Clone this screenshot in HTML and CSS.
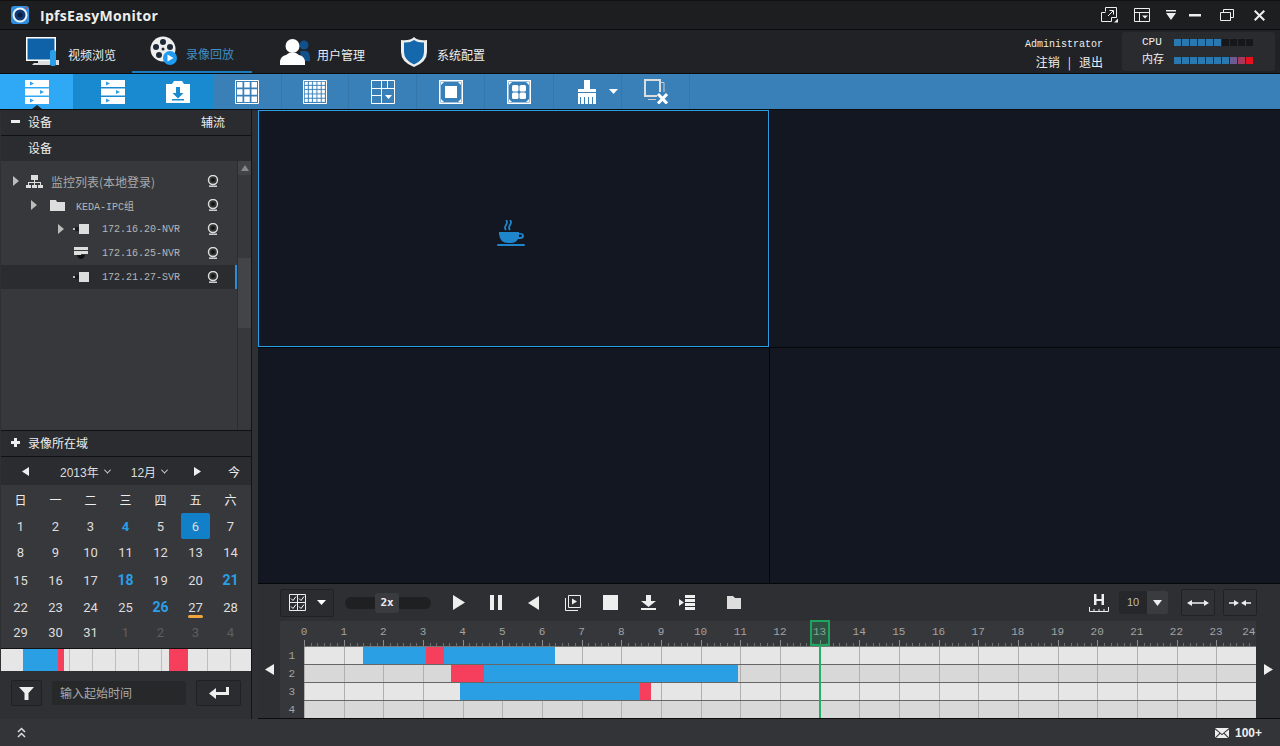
FILE: index.html
```html
<!DOCTYPE html>
<html lang="zh">
<head>
    <meta charset="UTF-8">
    <title>IpfsEasyMonitor</title>
    <link rel="stylesheet" href="styles.css">
</head>
<body>
<svg class="defs" width="0" height="0">
    <symbol id="lens" viewBox="0 0 12 12">
        <circle cx="6" cy="5" r="4.500" fill="#333" stroke="#ddd" stroke-width="1.400"/>
        <circle cx="6" cy="5" r="1.800" fill="#111"/>
        <path d="M2 11.200h8" stroke="#ddd" stroke-width="1.400"/>
    </symbol>
    <symbol id="cam" viewBox="0 0 16 10">
        <rect x="6" y="0" width="10" height="10" fill="#ddd"/>
        <rect x="2" y="3" width="4" height="4" fill="#1c1c1c"/>
        <rect x="0" y="4" width="2" height="2" fill="#bbb"/>
    </symbol>
    <symbol id="tri" viewBox="0 0 6 10"><path d="M0 0l6 5-6 5z" fill="#bbb"/></symbol>
    <symbol id="rows" viewBox="0 0 24 24">
        <path d="M0 0h24v7H0zM0 8.500h24v7H0zM0 17h24v7H0z" fill="#fff"/>
        <path d="M5 1.500l4 2-4 2zM15 10l4 2-4 2zM5 18.500l4 2-4 2z" fill="#2f9fe4"/>
    </symbol>
    <pattern id="dots" width="4.300" height="4.300" patternUnits="userSpaceOnUse" x="1.500" y="1.500">
        <rect width="3.300" height="3.300" fill="#fff"/>
    </pattern>
</svg>

<div class="app">
    <div class="titlebar">
        <svg class="logo" width="18" height="18" viewBox="0 0 18 18">
            <rect width="18" height="18" rx="3" fill="#2f8fe0"/>
            <circle cx="9" cy="9" r="7.500" fill="#eef4fb"/>
            <circle cx="9" cy="9" r="5.500" fill="#123a73"/>
            <circle cx="9" cy="9" r="2.500" fill="#0a1d40"/>
            <circle cx="15" cy="2" r="1" fill="#e33"/>
        </svg>
        <span class="app-name">IpfsEasyMonitor</span>
        <div class="win-btns">
            <svg width="20" height="16" viewBox="0 0 20 16" fill="none" stroke="#eee"><path d="M.5 5.500h4M.5 5.500v9h10v-4M4.500 4.500v-4h11v10h-5"/><path d="M7 9l5-5M8.500 3.500h4v4"/><path d="M17 15.500h-4l4-4z" fill="#eee" stroke="none"/></svg>
            <svg width="19" height="14" viewBox="0 0 19 14" fill="none" stroke="#eee"><path d="M.5.500h15v13H.5zM.5 4.500h15M5.500 4.500v9"/><path d="M8 7.500h6l-3 3z" fill="#eee" stroke="none"/></svg>
            <svg width="10" height="10" viewBox="0 0 10 10"><path d="M0 0h10v1.500H0zM0 3h10l-5 7z" fill="#eee"/></svg>
            <svg width="18" height="3" viewBox="0 0 18 3"><path d="M0 0h12v2.500H0z" fill="#eee"/></svg>
            <svg width="21" height="12" viewBox="0 0 21 12" fill="none" stroke="#eee"><path d="M.5 3.500h10v8H.5zM3.500 3V.5h10v8H11"/></svg>
            <svg width="11" height="11" viewBox="0 0 11 11" fill="none" stroke="#eee" stroke-width="2"><path d="M.7.7l9.600 9.600M10.300.7L.7 10.300"/></svg>
        </div>
    </div>

    <div class="navbar">
        <div class="nav-item nav-video">
            <svg width="34" height="29" viewBox="0 0 34 29">
                <rect x="0" y="0" width="30" height="24" fill="#fff"/>
                <rect x="1.500" y="1.500" width="27" height="21" fill="#0f62a8"/>
                <path d="M6 28l2-2h4v-2h12v4z" fill="#ddd"/>
                <rect x="24" y="13" width="6" height="16" rx="2" fill="#2a9fe8"/>
                <rect x="30" y="23" width="3" height="5" fill="#ddd"/>
            </svg>
            <span>视频浏览</span>
        </div>
        <div class="nav-item nav-record">
            <svg width="28" height="30" viewBox="0 0 28 30">
                <circle cx="13" cy="13" r="12.500" fill="#eee"/>
                <g fill="#1c2a38"><circle cx="13" cy="6" r="3"/><circle cx="6" cy="11" r="3"/><circle cx="20" cy="11" r="3"/><circle cx="9" cy="19" r="3"/><circle cx="13" cy="13" r="1.500"/></g>
                <circle cx="20" cy="22" r="7" fill="#1f9bf0"/>
                <path d="M17.500 18.500l6 3.500-6 3.500z" fill="#fff"/>
            </svg>
            <span>录像回放</span>
        </div>
        <div class="nav-item nav-user">
            <svg width="30" height="28" viewBox="0 0 30 28">
                <circle cx="24" cy="7" r="4.500" fill="#12508a"/>
                <path d="M20 13h7q3 2 3 7v3h-8z" fill="#12508a"/>
                <circle cx="12.500" cy="8" r="7" fill="#fff"/>
                <path d="M0 27v-4q1-5 6-6l3-2h7l3 2q5 1 6 6v4z" fill="#fff"/>
            </svg>
            <span>用户管理</span>
        </div>
        <div class="nav-item nav-config">
            <svg width="28" height="30" viewBox="0 0 28 30">
                <path d="M14 0q4 4 13 3v12q0 10-13 15Q1 25 1 15V3q9 1 13-3z" fill="#eee"/>
                <path d="M14 3q4 3 10 2.500V15q0 8-10 12.500Q4 23 4 15V5.500Q10 6 14 3z" fill="#1568ab"/>
            </svg>
            <span>系统配置</span>
        </div>
        <div class="user-box">
            <div class="user-name">Administrator</div>
            <div class="user-links">注销<span class="user-sep">|</span>退出</div>
        </div>
        <div class="meter-box">
            <div class="meter-row">
                <span class="meter-label">CPU</span>
                <div class="meter">
                    <i class="on"></i><i class="on"></i><i class="on"></i><i class="on"></i><i class="on"></i><i class="on"></i><i></i><i></i><i></i><i></i>
                </div>
            </div>
            <div class="meter-row">
                <span class="meter-label">内存</span>
                <div class="meter">
                    <i class="on"></i><i class="on"></i><i class="on"></i><i class="on"></i><i class="on"></i><i class="on"></i><i class="on"></i><i style="background:#6d5c92"></i><i style="background:#a53a5c"></i><i style="background:#e8101c"></i>
                </div>
            </div>
        </div>
    </div>

    <div class="toolbar">
        <div class="tool tool-active w73"><svg width="24" height="24"><use href="#rows"/></svg></div>
        <div class="tool tool-blue tool-second w70"><svg width="24" height="24"><use href="#rows"/></svg></div>
        <div class="tool tool-blue w70">
            <svg width="24" height="22" viewBox="0 0 24 22"><path d="M0 3h6l2-3h8l2 3h6v19H0z" fill="#fff"/><path d="M10 6h4v6h3.500L12 17.500 6.500 12H10z" fill="#1a8ad0"/><path d="M6 18h12v1.500H6z" fill="#1a8ad0"/></svg>
        </div>
        <div class="tool w69">
            <svg width="24" height="24" viewBox="0 0 24 24" fill="none" stroke="#fff"><path d="M.5.5h23v23H.5z"/><path d="M2 2h5.500v5.500H2zM9.250 2h5.500v5.500h-5.500zM16.500 2H22v5.500h-5.500zM2 9.250h5.500v5.500H2zM9.250 9.250h5.500v5.500h-5.500zM16.500 9.250H22v5.500h-5.500zM2 16.500h5.500V22H2zM9.250 16.500h5.500V22h-5.500zM16.500 16.500H22V22h-5.500z" fill="#fff" stroke="none"/></svg>
        </div>
        <div class="tool w67">
            <svg width="24" height="24" viewBox="0 0 24 24"><path d="M.5.500h23v23H.5z" fill="none" stroke="#fff"/><rect x="1.500" y="1.500" width="21" height="21" fill="url(#dots)"/></svg>
        </div>
        <div class="tool w68">
            <svg width="24" height="24" viewBox="0 0 24 24" fill="none" stroke="#fff"><path d="M.5.500h23v23H.5zM.5 8.500h23M.5 15.500h10M10.500.5v23M16.500.5v8"/><path d="M14 15h7l-3.500 4z" fill="#fff" stroke="none"/></svg>
        </div>
        <div class="tool w68">
            <svg width="24" height="24" viewBox="0 0 24 24" fill="none" stroke="#fff" stroke-width="1.500"><path d="M.75.75h22.500v22.500H.75z"/><rect x="6" y="6" width="12" height="12" fill="#fff" stroke="none"/><path d="M2 2h3L2 5zM22 2h-3l3 3zM2 22h3l-3-3zM22 22h-3l3-3z" fill="#fff" stroke="none"/></svg>
        </div>
        <div class="tool w69">
            <svg width="24" height="24" viewBox="0 0 24 24" fill="none" stroke="#fff" stroke-width="1.500"><path d="M.75.75h22.500v22.500H.75z"/><g fill="#fff" stroke="none"><rect x="5" y="5" width="6.500" height="6.500" rx="1.500"/><rect x="12.500" y="5" width="6.500" height="6.500" rx="1.500"/><rect x="5" y="12.500" width="6.500" height="6.500" rx="1.500"/><rect x="12.500" y="12.500" width="6.500" height="6.500" rx="1.500"/></g><path d="M2 2h3L2 5zM22 2h-3l3 3zM2 22h3l-3-3zM22 22h-3l3-3z" fill="#fff" stroke="none"/></svg>
        </div>
        <div class="tool w68 tool-brush">
            <svg width="20" height="24" viewBox="0 0 20 24"><path d="M7 0h6v9h6v3H1V9h6zM1 13h18v11h-3v-7h-1v7h-3v-7h-1v7H8v-7H7v7H4v-7H3v7H1z" fill="#fff"/></svg>
            <svg width="9" height="5" viewBox="0 0 9 5"><path d="M0 0h9L4.500 5z" fill="#fff"/></svg>
        </div>
        <div class="tool w68">
            <svg width="24" height="25" viewBox="0 0 24 25" fill="none"><path d="M13 17H1V1h15v12" stroke="#ddd" stroke-width="2"/><path d="M16.500 3.500H20V13M4 20.500h8" stroke="#ccc" stroke-width="1"/><path d="M14 15l9 9.500M23 15l-9 9.500" stroke="#fff" stroke-width="3"/></svg>
        </div>
    </div>

    <div class="main">
        <div class="side">
            <div class="side-head">
                <span class="sign"></span><span class="side-title">设备</span><span class="side-right">辅流</span>
            </div>
            <div class="side-sub">设备</div>
            <div class="tree-wrap">
                <div class="tree">
                    <div class="tree-row">
                        <svg class="arrow" width="6" height="10"><use href="#tri"/></svg>
                        <svg class="node" width="17" height="13" viewBox="0 0 17 13"><path d="M5 0h7v5H5zM8 5h1v2h6v3h-1V8H9v2H8V8H3v2H2V7h6zM0 10h5v3H0zM6 10h5v3H6zM12 10h5v3h-5z" fill="#ddd"/></svg>
                        <span class="tree-cn">监控列表(本地登录)</span>
                        <svg class="lens" width="12" height="12"><use href="#lens"/></svg>
                    </div>
                    <div class="tree-row lv1">
                        <svg class="arrow" width="6" height="10"><use href="#tri"/></svg>
                        <svg class="node" width="15" height="11" viewBox="0 0 15 11"><path d="M0 0h6l1 2h8v9H0z" fill="#ddd"/></svg>
                        <span class="tree-label">KEDA-IPC组</span>
                        <svg class="lens" width="12" height="12"><use href="#lens"/></svg>
                    </div>
                    <div class="tree-row lv2">
                        <svg class="arrow" width="6" height="10"><use href="#tri"/></svg>
                        <svg class="node" width="16" height="10"><use href="#cam"/></svg>
                        <span class="tree-label">172.16.20-NVR</span>
                        <svg class="lens" width="12" height="12"><use href="#lens"/></svg>
                    </div>
                    <div class="tree-row lv2">
                        <span class="arrow-gap"></span>
                        <svg class="node" width="16" height="12" viewBox="0 0 16 12"><path d="M1 0h14v3H1zM1 4h14v3H8v1H1z" fill="#ddd"/><path d="M4 8h8q-1 4-4 4T4 8z" fill="#111"/></svg>
                        <span class="tree-label">172.16.25-NVR</span>
                        <svg class="lens" width="12" height="12"><use href="#lens"/></svg>
                    </div>
                    <div class="tree-row lv2 tree-sel">
                        <span class="arrow-gap"></span>
                        <svg class="node" width="16" height="10"><use href="#cam"/></svg>
                        <span class="tree-label">172.21.27-SVR</span>
                        <svg class="lens" width="12" height="12"><use href="#lens"/></svg>
                    </div>
                </div>
                <div class="scroll">
                    <div class="scroll-up"><svg width="8" height="6"><path d="M0 6l4-6 4 6z" fill="#888"/></svg></div>
                    <div class="scroll-thumb"></div>
                </div>
            </div>
            <div class="side-head side-head2">
                <span class="sign sign-plus"></span><span class="side-title">录像所在域</span>
            </div>
            <div class="cal-nav">
                <svg width="7" height="9"><path d="M7 0v9L0 4.500z" fill="#eee"/></svg>
                <span class="cal-sel">2013年<b></b></span>
                <span class="cal-sel">12月<b></b></span>
                <svg width="7" height="9"><path d="M0 0v9l7-4.500z" fill="#eee"/></svg>
                <span class="cal-today">今</span>
            </div>
            <div class="cal">
                <span class="cal-h">日</span><span class="cal-h">一</span><span class="cal-h">二</span><span class="cal-h">三</span><span class="cal-h">四</span><span class="cal-h">五</span><span class="cal-h">六</span>
                <span>1</span><span>2</span><span>3</span><span class="rec rec-one">4</span><span>5</span><span class="cur">6</span><span>7</span>
                <span>8</span><span>9</span><span>10</span><span>11</span><span>12</span><span>13</span><span>14</span>
                <span>15</span><span>16</span><span>17</span><span class="rec">18</span><span>19</span><span>20</span><span class="rec">21</span>
                <span>22</span><span>23</span><span>24</span><span>25</span><span class="rec">26</span><span class="mark">27</span><span>28</span>
                <span>29</span><span>30</span><span>31</span><span class="off">1</span><span class="off">2</span><span class="off">3</span><span class="off">4</span>
            </div>
            <div class="day-strip">
                <i class="seg-blue" style="left:22px;width:35px"></i>
                <i class="seg-red" style="left:57px;width:6px"></i>
                <i class="seg-red" style="left:168px;width:19px"></i>
            </div>
            <div class="jump">
                <div class="btn btn-filter"><svg width="15" height="13" viewBox="0 0 15 13"><path d="M0 0h15L9.500 6v7h-4V6z" fill="#eee"/></svg></div>
                <div class="jump-input">输入起始时间</div>
                <div class="btn btn-enter"><svg width="20" height="12" viewBox="0 0 20 12"><path d="M17 0h3v8H7v4L0 6.500 7 1v4h10z" fill="#eee"/></svg></div>
            </div>
        </div>

        <div class="work">
            <div class="videos">
                <div class="pane pane-active">
                    <svg width="28" height="26" viewBox="0 0 28 26">
                        <path d="M9 10q-2-2 0-5t0-5M13 10q-2-2 0-5t0-5" fill="none" stroke="#1f86cc" stroke-width="1.800"/>
                        <path d="M2 12h20v1h1q4 0 4 3t-4 3h-2q-2 4-7 4h-3Q3 23 2 14zM22 14.500V17h1q2 0 2-1.300t-2-1.200z" fill="#1f86cc"/>
                        <rect x="0" y="24" width="28" height="2" rx="1" fill="#1f86cc"/>
                    </svg>
                </div>
                <div class="pane"></div>
                <div class="pane"></div>
                <div class="pane"></div>
            </div>
            <div class="controls">
                <div class="btn btn-view">
                    <svg width="18" height="18" viewBox="0 0 18 18" fill="none" stroke="#eee"><path d="M.5.5h16v16H.5zM.5 8.500h16M8.500.5v16"/><path d="M2 4.500l2 2 3-4M10 4.500l2 2 3-4M2 12.500l2 2 3-4M10 12.500l2 2 3-4" stroke="#fff"/></svg>
                    <svg width="9" height="5" viewBox="0 0 9 5"><path d="M0 0h9L4.500 5z" fill="#fff"/></svg>
                </div>
                <div class="speed"><span class="speed-knob">2x</span></div>
                <div class="ctrl-icons">
                    <svg class="ctrl-play" width="12" height="15" viewBox="0 0 12 15"><path d="M0 0l12 7.500L0 15z" fill="#eee"/></svg>
                    <svg class="ctrl-wide" width="12" height="15" viewBox="0 0 12 15"><path d="M0 0h4v15H0zM8 0h4v15H8z" fill="#eee"/></svg>
                    <svg class="ctrl-wide" width="11" height="14" viewBox="0 0 11 14"><path d="M11 0v14L0 7z" fill="#eee"/></svg>
                    <svg class="ctrl-tight" width="16" height="16" viewBox="0 0 16 16" fill="none" stroke="#eee"><path d="M3.500.5h12v12h-12zM.5 3v12.500H13"/><path d="M7 3.500l5 3-5 3z" fill="#eee" stroke="none"/></svg>
                    <svg width="15" height="15" viewBox="0 0 15 15"><path d="M0 0h15v15H0z" fill="#eee"/></svg>
                    <svg width="15" height="15" viewBox="0 0 15 15"><path d="M5 0h5v6h5l-7.500 6L0 6h5zM0 13h15v2H0z" fill="#eee"/></svg>
                    <svg width="16" height="15" viewBox="0 0 16 15"><path d="M0 4l5 3.500L0 11zM6 0h10v3H6zM6 4h10v3H6zM6 8h10v3H6zM6 12h10v3H6z" fill="#eee"/></svg>
                    <svg class="ctrl-folder" width="14" height="13" viewBox="0 0 14 13"><path d="M0 0h6l2 2h6v11H0z" fill="#ddd"/></svg>
                </div>
                <div class="ctrl-right">
                    <svg width="20" height="18" viewBox="0 0 20 18"><path d="M5 0h2.500v5h5V0H15v11h-2.500V7h-5v4H5z" fill="#eee"/><path d="M.5 13v4.500h19V13M5 15v2M10 15v2M15 15v2" fill="none" stroke="#eee"/></svg>
                    <div class="step"><span>10</span><b><svg width="9" height="6" viewBox="0 0 9 6"><path d="M0 0h9L4.500 6z" fill="#eee"/></svg></b></div>
                    <div class="btn btn-zoom"><svg width="22" height="6" viewBox="0 0 22 6"><path d="M0 3l5-3v2.200h12V0l5 3-5 3V3.800H5V6z" fill="#eee"/></svg></div>
                    <div class="btn btn-zoom"><svg width="22" height="6" viewBox="0 0 22 6"><path d="M0 2.200h5V0l5 3-5 3V3.800H0zM22 2.200h-5V0l-5 3 5 3V3.800h5z" fill="#eee"/></svg></div>
                </div>
            </div>
            <div class="timeline">
                <div class="tl-side"><svg width="9" height="11"><path d="M9 0v11L0 5.500z" fill="#eee"/></svg></div>
                <div class="tl-nums">
                    <span>1</span><span>2</span><span>3</span><span>4</span>
                </div>
                <div class="tl-body">
                    <div class="ruler">
                        <div class="ruler-labels">
                            <span>0</span><span>1</span><span>2</span><span>3</span><span>4</span><span>5</span><span>6</span><span>7</span><span>8</span><span>9</span><span>10</span><span>11</span><span>12</span><span>13</span><span>14</span><span>15</span><span>16</span><span>17</span><span>18</span><span>19</span><span>20</span><span>21</span><span>22</span><span>23</span><span class="ruler-last">24</span>
                        </div>
                    </div>
                    <div class="tl-row">
                        <i class="seg-blue" style="left:59px;width:192px"></i>
                        <i class="seg-red" style="left:122px;width:18px"></i>
                    </div>
                    <div class="tl-row tl-even">
                        <i class="seg-red" style="left:147px;width:33px"></i>
                        <i class="seg-blue" style="left:180px;width:254px"></i>
                    </div>
                    <div class="tl-row">
                        <i class="seg-blue" style="left:156px;width:180px"></i>
                        <i class="seg-red" style="left:336px;width:11px"></i>
                    </div>
                    <div class="tl-row tl-even tl-last"></div>
                    <div class="now-box"></div>
                    <div class="now-line"></div>
                </div>
                <div class="tl-side"><svg width="9" height="11"><path d="M0 0v11l9-5.500z" fill="#eee"/></svg></div>
            </div>
        </div>
    </div>

    <div class="statusbar">
        <svg width="9" height="11" viewBox="0 0 9 11" fill="none" stroke="#ddd" stroke-width="1.500"><path d="M1 5l3.500-3.500L8 5M1 10l3.500-3.500L8 10"/></svg>
        <div class="msg">
            <svg width="14" height="10" viewBox="0 0 14 10"><path d="M0 0h14L7 6zM0 1.500v8l4.500-4.500zM14 1.500v8L9.500 5zM1 10l4.300-4.300L7 7.200l1.700-1.500L13 10z" fill="#eee"/></svg>
            <span>100+</span>
        </div>
    </div>
</div>
</body>
</html>
```

FILE: styles.css
```css
* {
    padding: 0;
    margin: 0;
    box-sizing: border-box;
}

html, body {
    width: 1280px;
    height: 746px;
    overflow: hidden;
    background: #2f3033;
}

body {
    font-family: "Noto Sans CJK SC", "Liberation Sans", sans-serif;
    font-size: 12px;
    color: #eee;
}

svg {
    display: block;
    flex: none;
}

.defs {
    position: absolute;
}

.app {
    width: 1280px;
    height: 746px;
    display: flex;
    flex-direction: column;
}

/* title bar */
.titlebar {
    height: 30px;
    background: #1d1e20;
    border-top: 1px solid #111;
    border-bottom: 1px solid #0c0c0d;
    display: flex;
    align-items: center;
    padding-left: 11px;
}

.app-name {
    margin-left: 11px;
    font-family: "Open Sans", "Liberation Sans", sans-serif;
    font-weight: 700;
    font-size: 14px;
    letter-spacing: .3px;
    color: #eee;
}

.win-btns {
    margin-left: auto;
    display: flex;
    align-items: center;
    gap: 13px;
    padding-right: 15px;
}

/* main nav */
.navbar {
    height: 44px;
    background: #212225;
    border-bottom: 1px solid #0c0c0d;
    display: flex;
    align-items: center;
}

.nav-item {
    display: flex;
    align-items: center;
    height: 43px;
    font-size: 12px;
    color: #eee;
}

.nav-item span {
    padding-top: 6px;
}

.nav-video {
    width: 132px;
    padding-left: 26px;
    gap: 8px;
}

.nav-record {
    width: 120px;
    padding-left: 18px;
    gap: 8px;
    color: #3f8fc8;
    border-bottom: 2px solid #1a7cc0;
}

.nav-user {
    width: 148px;
    padding-left: 28px;
    gap: 7px;
}

.nav-config {
    gap: 9px;
}

.user-box {
    margin-left: auto;
    margin-right: 19px;
    text-align: right;
    color: #eee;
    padding-top: 6px;
}

.user-name {
    font-family: "Liberation Mono", monospace;
    font-size: 10px;
    line-height: 14px;
}

.user-links {
    line-height: 18px;
    margin-top: 1px;
}

.user-sep {
    margin: 0 8px;
}

.meter-box {
    width: 153px;
    height: 39px;
    margin-right: 5px;
    background: #2a2b2e;
    border-radius: 3px;
    padding: 3px 0 0 20px;
    display: flex;
    flex-direction: column;
    gap: 3px;
}

.meter-row {
    display: flex;
    align-items: center;
    height: 15px;
}

.meter-label {
    width: 32px;
    font-family: "Liberation Mono", "Noto Sans CJK SC", monospace;
    font-size: 11px;
    line-height: 15px;
}

.meter {
    display: flex;
}

.meter i {
    width: 7px;
    height: 7px;
    margin-right: 1px;
    background: #16171a;
}

.meter i.on {
    background: #2a78b0;
}

/* tool strip */
.toolbar {
    height: 36px;
    background: #3a80b8;
    border-bottom: 1px solid #0c0c0d;
    display: flex;
}

.tool {
    height: 35px;
    display: flex;
    align-items: center;
    justify-content: center;
    gap: 12px;
    border-right: 1px solid #3576ab;
}

.tool-active {
    background: #2fa9f5;
    border-right: 0;
    position: relative;
}

.tool-active::after {
    content: "";
    position: absolute;
    left: 32px;
    bottom: 0;
    border: 5px solid transparent;
    border-top: 0;
    border-bottom: 4px solid #212225;
}

.tool-blue {
    background: #1a8ad0;
    border-right: 0;
}

.tool-second {
    padding-left: 10px;
}

.tool-brush {
    padding-left: 20px;
}

.w73 { width: 73px; }
.w70 { width: 70px; }
.w69 { width: 69px; }
.w68 { width: 68px; }
.w67 { width: 67px; }

/* main area */
.main {
    flex: 1;
    display: flex;
    min-height: 0;
}

.side {
    width: 251px;
    margin-left: 1px;
    border-right: 1px solid #131416;
    display: flex;
    flex-direction: column;
    flex: none;
    margin-right: 6px;
    background: #2f3033;
}

.side-head {
    height: 26px;
    background: #2b2c2f;
    border-bottom: 1px solid #111;
    display: flex;
    align-items: center;
    padding: 0 26px 2px 10px;
}

.side-head2 {
    height: 27px;
    border-top: 1px solid #111;
}

.sign {
    width: 9px;
    height: 3px;
    background: #eee;
    position: relative;
}

.sign-plus::after {
    content: "";
    position: absolute;
    left: 3px;
    top: -3px;
    width: 3px;
    height: 9px;
    background: #eee;
}

.side-title {
    margin-left: 8px;
}

.side-right {
    margin-left: auto;
}

.side-sub {
    height: 25px;
    line-height: 23px;
    padding-left: 27px;
    background: #2b2c2f;
}

.tree-wrap {
    flex: 1;
    display: flex;
    background: #37383b;
    min-height: 0;
}

.tree {
    flex: 1;
    padding-top: 8px;
    min-width: 0;
}

.tree-row {
    height: 24px;
    display: flex;
    align-items: center;
    padding: 0 18px 0 12px;
}

.tree-row.lv1 { padding-left: 30px; }
.tree-row.lv2 { padding-left: 57px; }

.arrow {
    margin-right: 7px;
}

.arrow-gap {
    width: 13px;
}

.lv1 .arrow { margin-right: 13px; }
.lv2 .arrow { margin-right: 9px; }
.lv2 .arrow-gap { width: 15px; }

.tree-cn {
    margin-left: 8px;
    color: #a8a9aa;
    font-size: 12px;
}

.tree-label {
    margin-left: 11px;
    color: #b5b6b7;
    font-family: "Liberation Mono", "Noto Sans CJK SC", monospace;
    font-size: 10px;
}

.lv2 .tree-label {
    margin-left: 13px;
}

.lens {
    margin-left: auto;
}

.tree-sel {
    background: #2b2c2f;
    border-right: 2px solid #2a8fd8;
    padding-right: 16px;
}

.scroll {
    width: 14px;
    flex: none;
    background: #37383b;
    border-left: 1px solid #2c2d30;
    display: flex;
    flex-direction: column;
}

.scroll-up {
    height: 14px;
    background: #424346;
    display: flex;
    align-items: center;
    justify-content: center;
}

.scroll-thumb {
    height: 70px;
    margin-top: 83px;
    background: #434447;
}

.cal-nav {
    height: 28px;
    background: #2b2c2f;
    display: flex;
    align-items: center;
    padding: 0 10px 0 21px;
}

.cal-sel {
    display: flex;
    align-items: center;
    gap: 6px;
    font-family: "Liberation Sans", "Noto Sans CJK SC", sans-serif;
    font-size: 12px;
    margin-left: 31px;
    color: #ddd;
}

.cal-sel + .cal-sel {
    margin-left: 21px;
}

.cal-sel + .cal-sel + svg {
    margin-left: 27px;
}

.cal-sel b {
    width: 5px;
    height: 5px;
    border-right: 1px solid #ddd;
    border-bottom: 1px solid #ddd;
    transform: rotate(45deg) translate(-1px, -1px);
}

.cal-today {
    margin-left: auto;
    padding-right: 1px;
}

.cal {
    height: 163px;
    background: #37383b;
    display: grid;
    grid-template-columns: repeat(7, 35px);
    grid-template-rows: 28px 26px 27px 28px 26px 25px;
    padding-left: 2px;
    font-family: "Roboto", "Liberation Sans", sans-serif;
    font-size: 13px;
    color: #ddd;
}

.cal span {
    display: flex;
    align-items: center;
    justify-content: center;
}

.cal .cal-h {
    font-family: "Noto Sans CJK SC", sans-serif;
    font-size: 12px;
    color: #eee;
}

.cal .rec {
    color: #2a9fe8;
    font-size: 14px;
    font-weight: 700;
}

.cal .rec-one {
    font-size: 13px;
}

.cal .cur {
    background: #1280c8;
    border-radius: 2px;
    margin: 0 3px;
    color: #ddd;
}

.cal .mark {
    position: relative;
}

.cal .mark::after {
    content: "";
    position: absolute;
    left: 10px;
    bottom: 2px;
    width: 15px;
    height: 3px;
    border-radius: 2px;
    background: #f0a63c;
}

.cal .off {
    color: #5d5e60;
}

.day-strip {
    height: 23px;
    border-top: 1px solid #111;
    position: relative;
    background: repeating-linear-gradient(90deg, #e6e6e6 0, #e6e6e6 22px, #bdbdbd 22px, #bdbdbd 23px);
}

.day-strip i {
    position: absolute;
    top: 0;
    bottom: 0;
}

.seg-blue { background: #2a9fe4; }
.seg-red { background: #f53f5c; }

.jump {
    height: 48px;
    flex: none;
    background: #2f3033;
    display: flex;
    align-items: center;
    padding: 0 10px 4px;
    gap: 10px;
}

.btn {
    background: #2b2c2f;
    border: 1px solid #202124;
    border-radius: 2px;
    display: flex;
    align-items: center;
    justify-content: center;
}

.btn-filter {
    width: 31px;
    height: 26px;
}

.btn-enter {
    width: 45px;
    height: 26px;
}

.jump-input {
    width: 134px;
    height: 24px;
    line-height: 24px;
    background: #27282a;
    border-radius: 2px;
    padding-left: 8px;
    color: #a9aaab;
}

/* video panes and playback */
.work {
    flex: 1;
    display: flex;
    flex-direction: column;
    min-width: 0;
}

.videos {
    height: 474px;
    display: grid;
    grid-template-columns: 511px 1fr;
    grid-template-rows: 237px 1fr;
    gap: 1px;
    background: #05060a;
    border-bottom: 1px solid #05060a;
}

.pane {
    background: #131722;
    display: flex;
    align-items: center;
    justify-content: center;
}

.pane-active {
    border: 1px solid #2a9fe8;
}

.pane-active svg {
    margin: 8px 6px 0 0;
}

.controls {
    height: 37px;
    background: #2e2f32;
    display: flex;
    align-items: center;
    padding: 0 23px 0 22px;
}

.btn-view {
    width: 54px;
    height: 28px;
    gap: 10px;
}

.speed {
    width: 86px;
    height: 12px;
    margin-left: 11px;
    background: #1f2022;
    border-radius: 6px;
    display: flex;
    align-items: center;
    justify-content: center;
}

.speed-knob {
    width: 24px;
    height: 20px;
    line-height: 20px;
    border-radius: 3px;
    background: #3a3b3e;
    text-align: center;
    font-family: "DejaVu Sans Mono", monospace;
    font-size: 11px;
    font-weight: 700;
    margin-right: 2px;
}

.ctrl-icons {
    display: flex;
    align-items: center;
    margin-left: 22px;
    gap: 23px;
}

.ctrl-play {
    margin-right: 2px;
}

.ctrl-wide {
    margin-right: 3px;
}

.ctrl-tight {
    margin-right: -1px;
}

.ctrl-folder {
    margin-left: 9px;
}

.ctrl-right {
    margin-left: auto;
    display: flex;
    align-items: center;
}

.step {
    width: 49px;
    height: 23px;
    margin-left: 10px;
    display: flex;
    font-size: 11px;
    color: #bbb;
    font-family: "Liberation Sans", sans-serif;
    background: #26272a;
    border-radius: 2px;
    overflow: hidden;
}

.step span {
    width: 28px;
    line-height: 23px;
    text-align: center;
}

.step b {
    flex: 1;
    background: #3a3b3e;
    display: flex;
    align-items: center;
    justify-content: center;
}

.btn-zoom {
    width: 34px;
    height: 27px;
    margin-left: 13px;
    background: #303134;
}

.btn-zoom + .btn-zoom {
    margin-left: 8px;
}

.timeline {
    height: 98px;
    display: flex;
    border-bottom: 1px solid #0c0c0d;
}

.tl-side {
    width: 22px;
    flex: none;
    background: #2e2f32;
    display: flex;
    align-items: center;
    justify-content: center;
}

.timeline > .tl-side:last-child {
    width: 24px;
}

.tl-nums {
    width: 24px;
    background: #36373a;
    padding: 26px 9px 0 0;
    font-family: "Liberation Mono", monospace;
    font-size: 11px;
    color: #a2a3a4;
    text-align: right;
    display: flex;
    flex-direction: column;
    flex: none;
}

.tl-nums span {
    height: 18px;
    line-height: 18px;
}

.tl-body {
    flex: 1;
    min-width: 0;
    position: relative;
    background: #36373a;
}

.ruler {
    height: 26px;
    background-color: #36373a;
    background-image:
        repeating-linear-gradient(90deg, #8b8b8b 0, #8b8b8b 1px, transparent 1px, transparent 39.667px),
        repeating-linear-gradient(90deg, #6f6f6f 0, #6f6f6f 1px, transparent 1px, transparent 6.611px);
    background-size: 100% 6px, 100% 3px;
    background-position: 0 bottom, 0 bottom;
    background-repeat: no-repeat;
    border-bottom: 1px solid #777;
}

.ruler-labels {
    display: flex;
    margin-left: -19.800px;
    padding-top: 4px;
    font-family: "Liberation Mono", monospace;
    font-size: 11px;
    color: #a2a3a4;
}

.ruler-labels span {
    flex: 0 0 39.667px;
    text-align: center;
    line-height: 14px;
}

.ruler-last {
    transform: translateX(-7px);
}

.tl-row {
    height: 18px;
    position: relative;
    background-color: #e6e6e6;
    background-image: repeating-linear-gradient(90deg, #b0b0b0 0, #b0b0b0 1px, transparent 1px, transparent 39.667px);
    border-bottom: 1px solid #666;
}

.tl-even {
    background-color: #d8d8d8;
}

.tl-last {
    height: 17px;
    border-bottom: 0;
}

.tl-row i {
    position: absolute;
    top: 0;
    bottom: 0;
}

.now-box {
    position: absolute;
    left: 506px;
    top: -1px;
    width: 20px;
    height: 26px;
    border: 2px solid #1fa35e;
    background: rgba(31, 163, 94, .25);
}

.now-line {
    position: absolute;
    left: 515px;
    top: 25px;
    width: 2px;
    bottom: 0;
    background: #24b066;
}

/* status bar */
.statusbar {
    height: 27px;
    flex: none;
    background: #333437;
    display: flex;
    align-items: center;
    padding: 0 18px 0 17px;
    justify-content: space-between;
}

.msg {
    display: flex;
    align-items: center;
    gap: 6px;
    font-family: "Liberation Sans", sans-serif;
    font-size: 12px;
    font-weight: 700;
}
```
